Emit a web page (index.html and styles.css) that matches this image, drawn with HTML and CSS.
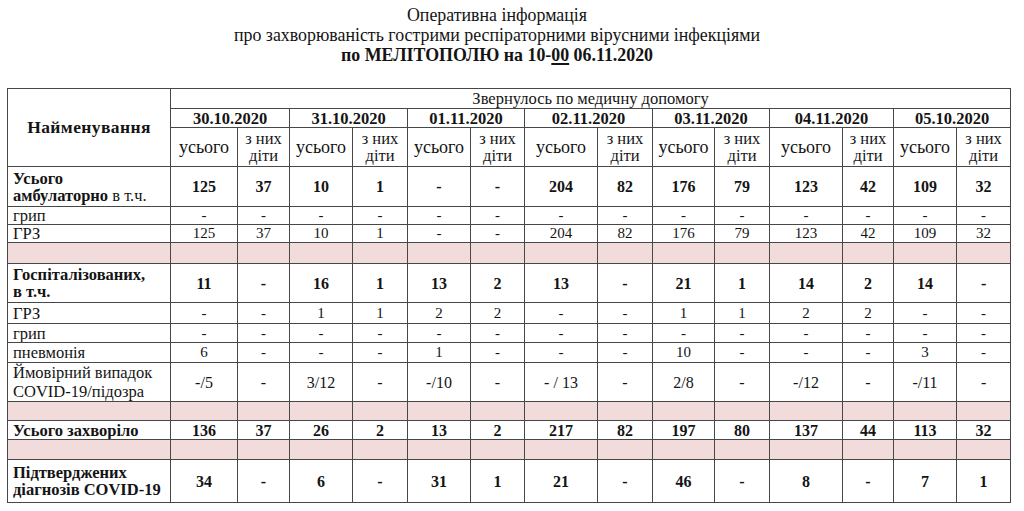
FILE: index.html
```html
<!DOCTYPE html>
<html lang="uk">
<head>
<meta charset="utf-8">
<title>Оперативна інформація</title>
<link rel="stylesheet" href="styles.css">
</head>
<body>
<div class="page">
  <div class="title">
    <div class="t1">Оперативна інформація</div>
    <div class="t2">про захворюваність гострими респіраторними вірусними інфекціями</div>
    <div class="t3">по МЕЛІТОПОЛЮ на 10-<u>00</u> 06.11.2020</div>
  </div>
  <table class="grid">
    <colgroup>
      <col class="c-name">
      <col class="c67"><col class="c52">
      <col class="c63"><col class="c55">
      <col class="c63"><col class="c54">
      <col class="c73"><col class="c55">
      <col class="c62"><col class="c55">
      <col class="c73"><col class="c51">
      <col class="c63"><col class="c54">
    </colgroup>
    <tr class="h20">
      <td rowspan="3" class="name-head">Найменування</td>
      <td colspan="14" class="appealed">Звернулось по медичну допомогу</td>
    </tr>
    <tr class="h19 dates">
      <td colspan="2">30.10.2020</td>
      <td colspan="2">31.10.2020</td>
      <td colspan="2">01.11.2020</td>
      <td colspan="2">02.11.2020</td>
      <td colspan="2">03.11.2020</td>
      <td colspan="2">04.11.2020</td>
      <td colspan="2">05.10.2020</td>
    </tr>
    <tr class="h39 sub">
      <td>усього</td><td class="kids">з них<br>діти</td>
      <td>усього</td><td class="kids">з них<br>діти</td>
      <td>усього</td><td class="kids">з них<br>діти</td>
      <td>усього</td><td class="kids">з них<br>діти</td>
      <td>усього</td><td class="kids">з них<br>діти</td>
      <td>усього</td><td class="kids">з них<br>діти</td>
      <td>усього</td><td class="kids">з них<br>діти</td>
    </tr>
    <tr class="h40 bold">
      <td class="label"><b>Усього<br>амбулаторно</b> <span class="norm">в т.ч.</span></td>
      <td>125</td><td>37</td><td>10</td><td>1</td><td>-</td><td>-</td><td>204</td><td>82</td><td>176</td><td>79</td><td>123</td><td>42</td><td>109</td><td>32</td>
    </tr>
    <tr class="h18">
      <td class="label">грип</td>
      <td>-</td><td>-</td><td>-</td><td>-</td><td>-</td><td>-</td><td>-</td><td>-</td><td>-</td><td>-</td><td>-</td><td>-</td><td>-</td><td>-</td>
    </tr>
    <tr class="h18">
      <td class="label">ГРЗ</td>
      <td>125</td><td>37</td><td>10</td><td>1</td><td>-</td><td>-</td><td>204</td><td>82</td><td>176</td><td>79</td><td>123</td><td>42</td><td>109</td><td>32</td>
    </tr>
    <tr class="h21 pink">
      <td></td><td></td><td></td><td></td><td></td><td></td><td></td><td></td><td></td><td></td><td></td><td></td><td></td><td></td><td></td>
    </tr>
    <tr class="h39 bold">
      <td class="label">Госпіталізованих,<br>в т.ч.</td>
      <td>11</td><td>-</td><td>16</td><td>1</td><td>13</td><td>2</td><td>13</td><td>-</td><td>21</td><td>1</td><td>14</td><td>2</td><td>14</td><td>-</td>
    </tr>
    <tr class="h21">
      <td class="label">ГРЗ</td>
      <td>-</td><td>-</td><td>1</td><td>1</td><td>2</td><td>2</td><td>-</td><td>-</td><td>1</td><td>1</td><td>2</td><td>2</td><td>-</td><td>-</td>
    </tr>
    <tr class="h19">
      <td class="label">грип</td>
      <td>-</td><td>-</td><td>-</td><td>-</td><td>-</td><td>-</td><td>-</td><td>-</td><td>-</td><td>-</td><td>-</td><td>-</td><td>-</td><td>-</td>
    </tr>
    <tr class="h20">
      <td class="label">пневмонія</td>
      <td>6</td><td>-</td><td>-</td><td>-</td><td>1</td><td>-</td><td>-</td><td>-</td><td>10</td><td>-</td><td>-</td><td>-</td><td>3</td><td>-</td>
    </tr>
    <tr class="h39 big">
      <td class="label">Ймовірний випадок<br>COVID-19/підозра</td>
      <td>-/5</td><td>-</td><td>3/12</td><td>-</td><td>-/10</td><td>-</td><td>- / 13</td><td>-</td><td>2/8</td><td>-</td><td>-/12</td><td>-</td><td>-/11</td><td>-</td>
    </tr>
    <tr class="h19 pink">
      <td></td><td></td><td></td><td></td><td></td><td></td><td></td><td></td><td></td><td></td><td></td><td></td><td></td><td></td><td></td>
    </tr>
    <tr class="h19 bold">
      <td class="label">Усього захворіло</td>
      <td>136</td><td>37</td><td>26</td><td>2</td><td>13</td><td>2</td><td>217</td><td>82</td><td>197</td><td>80</td><td>137</td><td>44</td><td>113</td><td>32</td>
    </tr>
    <tr class="h20 pink">
      <td></td><td></td><td></td><td></td><td></td><td></td><td></td><td></td><td></td><td></td><td></td><td></td><td></td><td></td><td></td>
    </tr>
    <tr class="h43 bold">
      <td class="label">Підтверджених<br>діагнозів COVID-19</td>
      <td>34</td><td>-</td><td>6</td><td>-</td><td>31</td><td>1</td><td>21</td><td>-</td><td>46</td><td>-</td><td>8</td><td>-</td><td>7</td><td>1</td>
    </tr>
  </table>
</div>
</body>
</html>
```

FILE: styles.css
```css
html, body {
  margin: 0;
  padding: 0;
  background: #ffffff;
}

body {
  font-family: "Liberation Serif", "Times New Roman", serif;
  color: #141414;
}

.page {
  width: 1024px;
  height: 511px;
  overflow: hidden;
  padding: 5px 0 0 7px;
  box-sizing: border-box;
}

.title {
  width: 980px;
  text-align: center;
  font-size: 19px;
  line-height: 20px;
  transform: scaleX(0.94);
  transform-origin: center top;
  height: 83px;
}

.t3 {
  font-weight: bold;
}

.t3 u {
  text-decoration-thickness: 2px;
  text-underline-offset: 2px;
}

.grid {
  border-collapse: collapse;
  table-layout: fixed;
  width: 1004px;
  font-size: 15px;
}

.grid td {
  border: 1px solid #474747;
  padding: 0 2px;
  text-align: center;
  vertical-align: middle;
  line-height: 15px;
  overflow: hidden;
  white-space: nowrap;
}

.c-name { width: 163px; }
.c67 { width: 67px; }
.c52 { width: 52px; }
.c63 { width: 63px; }
.c55 { width: 55px; }
.c54 { width: 54px; }
.c73 { width: 73px; }
.c62 { width: 62px; }
.c51 { width: 51px; }

.h18 td { height: 17px; }
.h19 td { height: 18px; }
.h20 td { height: 19px; }
.h21 td { height: 20px; }
.h39 td { height: 38px; }
.h40 td { height: 39px; }
.h43 td { height: 42px; }

.grid td.name-head {
  font-weight: bold;
  font-size: 17.5px;
  letter-spacing: 0.4px;
}

.grid td.appealed {
  font-size: 16.5px;
}

.dates td {
  font-weight: bold;
  font-size: 16.5px;
}

.sub td {
  font-size: 18px;
}

.grid .sub td.kids {
  font-size: 16.5px;
  line-height: 17px;
  padding: 0;
}

.bold td {
  font-weight: bold;
  font-size: 16px;
}

.grid td.label {
  text-align: left;
  padding-left: 5px;
  line-height: 17px;
  font-size: 16.5px;
}

.norm {
  font-weight: normal;
  font-size: 16.5px;
}

.big td {
  font-size: 16px;
}

.grid .big td.label {
  line-height: 19px;
}

.pink td {
  background: #f2dcdb;
}
```
